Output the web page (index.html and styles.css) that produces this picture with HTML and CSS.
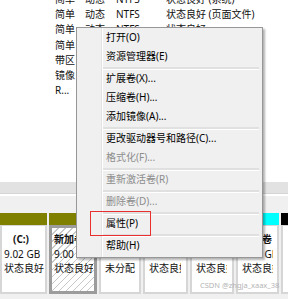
FILE: index.html
```html
<!DOCTYPE html>
<html lang="zh-CN">
<head>
    <meta charset="UTF-8">
    <title>磁盘管理</title>
    <link rel="stylesheet" href="styles.css">
</head>
<body>
    <div class="volumes">
        <div class="volume-rows">
            <div class="row"><span></span><span>简单</span><span>动态</span><span>NTFS</span><span>状态良好 (系统)</span></div>
            <div class="row"><span></span><span>简单</span><span>动态</span><span>NTFS</span><span>状态良好 (页面文件)</span></div>
            <div class="row"><span></span><span>简单</span><span>动态</span><span>NTFS</span><span>状态良好</span></div>
            <div class="row"><span></span><span>简单</span><span>动态</span><span>NTFS</span><span>状态良好</span></div>
            <div class="row"><span></span><span>带区</span><span>动态</span><span>NTFS</span><span>状态良好</span></div>
            <div class="row"><span></span><span>镜像</span><span>动态</span><span>NTFS</span><span>状态良好</span></div>
            <div class="row"><span></span><span>R...</span><span>动态</span><span>NTFS</span><span>状态良好</span></div>
        </div>
    </div>
    <div class="splitter"></div>
    <div class="disk">
        <div class="part p1">
            <div class="band olive"></div>
            <div class="box"><b class="drive">(C:)</b><span>9.02 GB</span><span>状态良好</span></div>
        </div>
        <div class="part p2">
            <div class="band olive"></div>
            <div class="box selected"><b>新加卷 (E:)</b><span>9.00 GB</span><span>状态良好</span></div>
        </div>
        <div class="part p3">
            <div class="band black"></div>
            <div class="box"><b>&nbsp;</b><span>&nbsp;</span><span>未分配</span></div>
        </div>
        <div class="part p4">
            <div class="band cyan"></div>
            <div class="box"><b>新加卷</b><span>9.00 GB</span><span>状态良好</span></div>
        </div>
        <div class="part p5">
            <div class="band cyan"></div>
            <div class="box"><b>新加卷</b><span>9.00 GB</span><span>状态良好</span></div>
        </div>
        <div class="part p6">
            <div class="band cyan"></div>
            <div class="box"><b>新加卷</b><span>9.00 GB</span><span>状态良好</span></div>
        </div>
        <div class="part p7">
            <div class="band black"></div>
            <div class="box"><b>&nbsp;</b><span>&nbsp;</span><span>&nbsp;</span></div>
        </div>
    </div>

    <div class="menu">
        <div class="item">打开(O)</div>
        <div class="item">资源管理器(E)</div>
        <div class="sep"></div>
        <div class="item">扩展卷(X)...</div>
        <div class="item">压缩卷(H)...</div>
        <div class="item">添加镜像(A)...</div>
        <div class="sep"></div>
        <div class="item">更改驱动器号和路径(C)...</div>
        <div class="item disabled">格式化(F)...</div>
        <div class="sep"></div>
        <div class="item disabled">重新激活卷(R)</div>
        <div class="sep"></div>
        <div class="item disabled">删除卷(D)...</div>
        <div class="sep"></div>
        <div class="item marked">属性(P)</div>
        <div class="sep"></div>
        <div class="item">帮助(H)</div>
    </div>

    <div class="watermark">CSDN @zhgja_xaax_38</div>
</body>
</html>
```

FILE: styles.css
```css
* {
    box-sizing: border-box;
    margin: 0;
    padding: 0;
}
body {
    position: relative;
    width: 288px;
    height: 299px;
    overflow: hidden;
    background: #fff;
    font-family: "Noto Sans", "Noto Sans CJK SC", sans-serif;
    font-size: 10px;
    color: #111;
}
.volumes {
    height: 182px;
    overflow: hidden;
}
.volume-rows {
    margin-top: -8px;
}
.row {
    display: grid;
    grid-template-columns: 55px 30px 31px 50px auto;
    height: 15.2px;
    line-height: 15.2px;
    white-space: nowrap;
}
.splitter {
    height: 12px;
    background: #e2e2e2;
    border-bottom: 1px solid #d4d4d4;
}
.disk {
    display: flex;
    height: 105px;
    padding-top: 17px;
    border-top: 2px solid #fff;
    background: #f0f0f0;
}
.part {
    display: flex;
    flex-direction: column;
    margin-right: 2px;
    height: 81px;
}
.p1 { width: 48px; }
.p2 { width: 48px; }
.p3 { width: 48px; }
.p4 { width: 45px; }
.p5 { width: 44px; }
.p6 { width: 43px; }
.p7 { width: 20px; margin-right: 0; }
.band {
    height: 12px;
}
.olive { background: #808000; }
.black { background: #000; }
.cyan { background: #00ffff; }
.box {
    flex: 1;
    display: flex;
    flex-direction: column;
    padding: 6px 4px 0 4px;
    background: #fff;
    border: 2px solid #d6d6d6;
    border-top: 1px solid #d6d6d6;
    overflow: hidden;
    white-space: nowrap;
    line-height: 14.5px;
}
.p1 .box {
    padding: 6px 1px 0 2px;
}
.p4 .box,
.p5 .box {
    padding-right: 5px;
}
.box b,
.box span {
    display: block;
    overflow: hidden;
}
.box b {
    font-weight: bold;
}
.box .drive {
    padding-left: 9px;
}
.box.selected {
    border: 3px solid #9c9c9c;
    padding: 4px 1px 0 2px;
    background: repeating-linear-gradient(135deg, #fff 0, #fff 4px, #c8c8c8 4px, #c8c8c8 5px);
}
.menu {
    position: absolute;
    left: 76px;
    top: 27px;
    width: 187px;
    padding: 1px 0;
    background: #f0f0f0;
    border: 1px solid #979797;
    box-shadow: 2px 2px 2px rgba(0, 0, 0, 0.3);
    background-image: linear-gradient(to right, #f0f0f0 24px, #e2e3e3 24px, #e2e3e3 25px, #fff 25px, #fff 26px, #f0f0f0 26px);
}
.item {
    height: 19px;
    line-height: 17px;
    padding-left: 29px;
    color: #000;
    white-space: nowrap;
}
.item.disabled {
    color: #8d8d8d;
}
.item.marked {
    position: relative;
}
.item.marked::after {
    content: "";
    position: absolute;
    left: 13px;
    top: -4px;
    width: 59px;
    height: 23px;
    border: 1px solid #e8312f;
}
.sep {
    height: 3px;
    margin: 0 3px 0 26px;
    border-top: 1px solid #e0e0e0;
    border-bottom: 1px solid #fff;
    background: #e0e0e0;
}
.watermark {
    position: absolute;
    left: 200px;
    top: 280px;
    font-size: 7.5px;
    color: #b4b4b4;
    white-space: nowrap;
}
```
